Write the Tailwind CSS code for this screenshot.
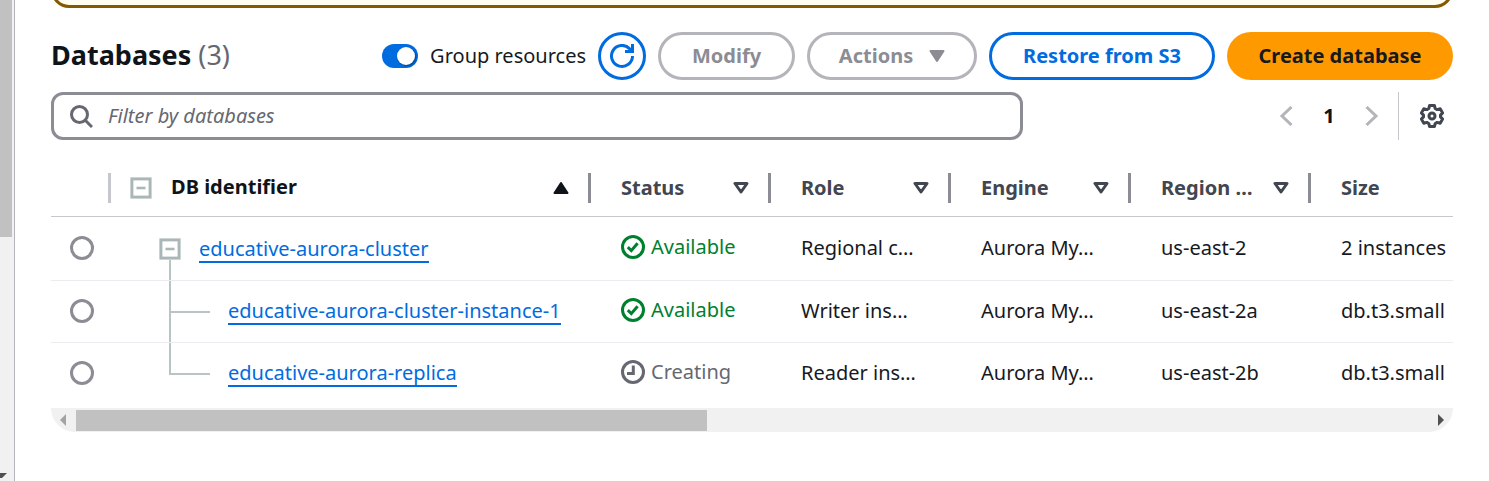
<!DOCTYPE html>
<html lang="en">
<head>
<meta charset="utf-8">
<meta name="viewport" content="width=device-width, initial-scale=1">
<title>Databases</title>
<script src="https://cdn.jsdelivr.net/npm/@tailwindcss/browser@4"></script>
</head>
<body class="bg-white font-['Noto_Sans','Open_Sans',sans-serif] text-xl leading-7 text-[#16191f]">
<svg class="hidden" aria-hidden="true">
  <symbol id="minus-box" viewBox="0 0 22 22"><rect x="1.9" y="1.9" width="18.2" height="18.2" fill="#fff" stroke="#aab7b8" stroke-width="3"/><path d="M6.5 11h9" stroke="#aab7b8" stroke-width="2.6"/></symbol>
  <symbol id="sort" viewBox="0 0 16 12"><path d="M2 1.5h12L8 10z" fill="none" stroke="#424650" stroke-width="3" stroke-linejoin="round"/></symbol>
  <symbol id="ok" viewBox="0 0 24 24"><circle cx="12" cy="12" r="10.5" fill="none" stroke="#00802f" stroke-width="3"/><path d="M6.8 12.2l3.5 3.4 6.3-7.4" fill="none" stroke="#00802f" stroke-width="3"/></symbol>
  <symbol id="clock" viewBox="0 0 24 24"><circle cx="12" cy="12" r="10.5" fill="none" stroke="#656871" stroke-width="3"/><path d="M12.3 5.5v8H6" fill="none" stroke="#656871" stroke-width="3"/></symbol>
</svg>
<div class="flex min-h-screen">
  <aside class="flex w-[15px] shrink-0 flex-col justify-between border-r border-[#b4b4bb] bg-[#f1f1f1]">
    <div class="h-[237px] w-3 bg-[#c1c1c1]"></div>
    <svg class="h-2 w-2" viewBox="0 0 8 8"><path d="M0 0h7L2 5H0z" fill="#505050"/></svg>
  </aside>
  <main class="min-w-0 flex-1 pr-9 pl-9">
    <div class="flex h-2 items-end overflow-hidden"><div class="h-16 w-full shrink-0 rounded-[18px] border-3 border-[#855900] bg-[#fffef0]"></div></div>

    <header class="flex items-center justify-between pt-6">
      <h1 class="pb-0.5 text-[27px] leading-9 font-bold text-[#0f141a]">Databases <span class="font-normal text-[#656871]">(3)</span></h1>
      <div class="flex items-center gap-3">
        <label class="flex items-center gap-3 whitespace-nowrap">
          <input type="checkbox" role="switch" checked class="peer sr-only">
          <span class="flex h-6 w-9 items-center justify-end rounded-full bg-[#006ce0] pr-[3px]"><span class="size-[18px] rounded-full bg-white shadow-[1px_1px_2px_#00000066]"></span></span>
          Group resources
        </label>
        <button aria-label="Refresh" class="flex size-12 items-center justify-center rounded-full border-3 border-[#006ce0]">
          <svg class="size-6" viewBox="0 0 24 24" fill="none" stroke="#006ce0" stroke-width="3"><path d="M22.500 12A10.500 10.500 0 1 1 19.500 4.600L22 7"/><path d="M22.500 0v7.500H15"/></svg>
        </button>
        <button disabled class="h-12 w-[137px] rounded-full border-3 border-[#b4b4bb] font-bold text-[#8c8c94]">Modify</button>
        <button disabled class="flex h-12 w-[170px] items-center justify-center gap-4 rounded-full border-3 border-[#b4b4bb] font-bold text-[#8c8c94]">Actions
          <svg class="h-3 w-4" viewBox="0 0 16 12"><path d="M1.5 1h13L8 11z" fill="#8c8c94" stroke="#8c8c94" stroke-width="2" stroke-linejoin="round"/></svg>
        </button>
        <button class="h-12 w-[226px] rounded-full border-3 border-[#006ce0] font-bold whitespace-nowrap text-[#006ce0]">Restore from S3</button>
        <button class="h-12 w-[226px] rounded-full bg-[#ff9900] font-bold whitespace-nowrap text-[#16191f]">Create database</button>
      </div>
    </header>

    <div class="flex pt-3">
      <label class="flex h-12 flex-1 items-center gap-[15px] rounded-xl border-3 border-[#8c8c94] pr-4 pl-[15px]">
        <svg class="size-6 shrink-0" viewBox="0 0 24 24" fill="none" stroke="#656871" stroke-width="3"><circle cx="10.5" cy="10.5" r="8"/><path d="M16 16l7 7"/></svg>
        <input type="text" aria-label="Filter databases" placeholder="Filter by databases" class="min-w-0 flex-1 outline-none placeholder:text-[#656871] placeholder:italic">
      </label>
      <nav aria-label="Pagination" class="flex items-center pl-64">
        <button aria-label="Previous page"><svg class="h-5 w-4" viewBox="0 0 16 20" fill="none" stroke="#b4b4bb" stroke-width="3"><path d="M12.5 1L3 10l9.500 9"/></svg></button>
        <span class="w-[68px] text-center font-bold text-[#0f141a]">1</span>
        <button aria-label="Next page"><svg class="h-5 w-4" viewBox="0 0 16 20" fill="none" stroke="#b4b4bb" stroke-width="3"><path d="M3.500 1L13 10l-9.500 9"/></svg></button>
        <span class="ml-[19px] h-12 w-px bg-[#c6c6cd]"></span>
        <button aria-label="Preferences" class="mr-[9px] ml-[21px]">
          <svg class="size-6" viewBox="0 0 24 24" fill="none" stroke="#424650" stroke-width="3" stroke-linejoin="round"><path d="M9.600 1.500h4.800l.8 3 2 1.100 3-.8 2.400 4.100-2.100 2.200v1.800l2.100 2.200-2.400 4.100-3-.8-2 1.100-.8 3H9.600l-.8-3-2-1.100-3 .8-2.400-4.100 2.100-2.200v-1.800L1.400 8.900l2.400-4.100 3 .8 2-1.100z"/><circle cx="12" cy="12" r="3"/></svg>
        </button>
      </nav>
    </div>

    <table class="mt-5 w-full table-fixed border-collapse text-left whitespace-nowrap">
      <colgroup><col class="w-[60px]"><col class="w-[480px]"><col class="w-[180px]"><col class="w-[180px]"><col class="w-[180px]"><col class="w-[180px]"><col></colgroup>
      <thead class="text-[#424650]">
        <tr class="h-14 border-b border-[#c6c6cd]">
          <th class="p-0"><div class="ml-auto h-[30px] w-[3px] bg-[#c6c6cd]"></div></th>
          <th class="p-0"><div class="flex items-center pl-[19px] text-[#0f141a]"><button aria-label="Collapse all" class="mr-[19px]"><svg class="size-[22px]"><use href="#minus-box"/></svg></button><span class="pb-0.5">DB identifier</span><button aria-label="Sorted ascending" class="mr-[19px] ml-auto"><svg class="h-3 w-4" viewBox="0 0 16 12"><path d="M1.500 11h13L8 1z" fill="#0f141a" stroke="#0f141a" stroke-width="2" stroke-linejoin="round"/></svg></button><span class="h-[30px] w-[3px] bg-[#8c8c94]"></span></div></th>
          <th class="p-0"><div class="flex items-center pl-[30px]">Status<button aria-label="Sort by status" class="mr-[19px] ml-auto"><svg class="h-3 w-4"><use href="#sort"/></svg></button><span class="h-[30px] w-[3px] bg-[#8c8c94]"></span></div></th>
          <th class="p-0"><div class="flex items-center pl-[30px]">Role<button aria-label="Sort by role" class="mr-[19px] ml-auto"><svg class="h-3 w-4"><use href="#sort"/></svg></button><span class="h-[30px] w-[3px] bg-[#8c8c94]"></span></div></th>
          <th class="p-0"><div class="flex items-center pl-[30px]">Engine<button aria-label="Sort by engine" class="mr-[19px] ml-auto"><svg class="h-3 w-4"><use href="#sort"/></svg></button><span class="h-[30px] w-[3px] bg-[#8c8c94]"></span></div></th>
          <th class="p-0"><div class="flex items-center pl-[30px]">Region …<button aria-label="Sort by region" class="mr-[19px] ml-auto"><svg class="h-3 w-4"><use href="#sort"/></svg></button><span class="h-[30px] w-[3px] bg-[#8c8c94]"></span></div></th>
          <th class="p-0 pl-[30px]">Size</th>
        </tr>
      </thead>
      <tbody>
        <tr class="h-16 border-b border-[#ebebf0]">
          <td class="p-0 pl-[19px]"><input type="radio" name="db" aria-label="educative-aurora-cluster" class="block size-6 appearance-none rounded-full border-3 border-[#8c8c94]"></td>
          <td class="p-0"><div class="flex h-[63px] items-center gap-[18px] pl-12"><div class="flex h-full flex-col items-center pt-[21px]"><button aria-label="Collapse cluster"><svg class="block size-[22px]"><use href="#minus-box"/></svg></button><span class="w-0.5 flex-1 bg-[#b9c4c5]"></span></div><a href="#" class="mt-1 border-b-2 border-[#006ce0] leading-6 text-[#006ce0]">educative-aurora-cluster</a></div></td>
          <td class="p-0 pb-0.5 pl-[30px]"><span class="flex items-center gap-1.5 text-[#00802f]"><svg class="size-6"><use href="#ok"/></svg>Available</span></td>
          <td class="p-0 pl-[30px]">Regional c…</td><td class="p-0 pl-[30px]">Aurora My…</td><td class="p-0 pl-[30px]">us-east-2</td><td class="p-0 pl-[30px]">2 instances</td>
        </tr>
        <tr class="h-[62px] border-b border-[#ebebf0]">
          <td class="p-0 pl-[19px]"><input type="radio" name="db" aria-label="educative-aurora-cluster-instance-1" class="block size-6 appearance-none rounded-full border-3 border-[#8c8c94]"></td>
          <td class="p-0"><div class="flex h-[61px] items-center gap-[18px] pl-[58px]"><svg class="h-full w-[41px]" viewBox="0 0 41 61" fill="none" stroke="#b9c4c5" stroke-width="2"><path d="M1 0v61M1 31h40"/></svg><a href="#" class="mt-0.5 border-b-2 border-[#006ce0] leading-6 text-[#006ce0]">educative-aurora-cluster-instance-1</a></div></td>
          <td class="p-0 pb-0.5 pl-[30px]"><span class="flex items-center gap-1.5 text-[#00802f]"><svg class="size-6"><use href="#ok"/></svg>Available</span></td>
          <td class="p-0 pl-[30px]">Writer ins…</td><td class="p-0 pl-[30px]">Aurora My…</td><td class="p-0 pl-[30px]">us-east-2a</td><td class="p-0 pl-[30px]">db.t3.small</td>
        </tr>
        <tr class="h-[62px]">
          <td class="p-0 pl-[19px]"><input type="radio" name="db" aria-label="educative-aurora-replica" class="block size-6 appearance-none rounded-full border-3 border-[#8c8c94]"></td>
          <td class="p-0"><div class="flex h-[61px] items-center gap-[18px] pl-[58px]"><svg class="h-full w-[41px]" viewBox="0 0 41 61" fill="none" stroke="#b9c4c5" stroke-width="2"><path d="M1 0v31h40"/></svg><a href="#" class="mt-0.5 border-b-2 border-[#006ce0] leading-6 text-[#006ce0]">educative-aurora-replica</a></div></td>
          <td class="p-0 pb-0.5 pl-[30px]"><span class="flex items-center gap-1.5 text-[#656871]"><svg class="size-6"><use href="#clock"/></svg>Creating</span></td>
          <td class="p-0 pl-[30px]">Reader ins…</td><td class="p-0 pl-[30px]">Aurora My…</td><td class="p-0 pl-[30px]">us-east-2b</td><td class="p-0 pl-[30px]">db.t3.small</td>
        </tr>
      </tbody>
    </table>
    <div class="mt-1 flex h-6 items-center overflow-hidden rounded-b-3xl bg-[#f1f1f1]">
      <svg class="mr-[10px] ml-[9px] h-3 w-1.5" viewBox="0 0 6 12"><path d="M6 0v12L0 6z" fill="#a3a3a3"/></svg>
      <div class="h-[21px] w-[45%] bg-[#c1c1c1]"></div>
      <svg class="mr-[9px] ml-auto h-3 w-1.5" viewBox="0 0 6 12"><path d="M0 0v12l6-6z" fill="#505050"/></svg>
    </div>
  </main>
</div>
</body>
</html>
